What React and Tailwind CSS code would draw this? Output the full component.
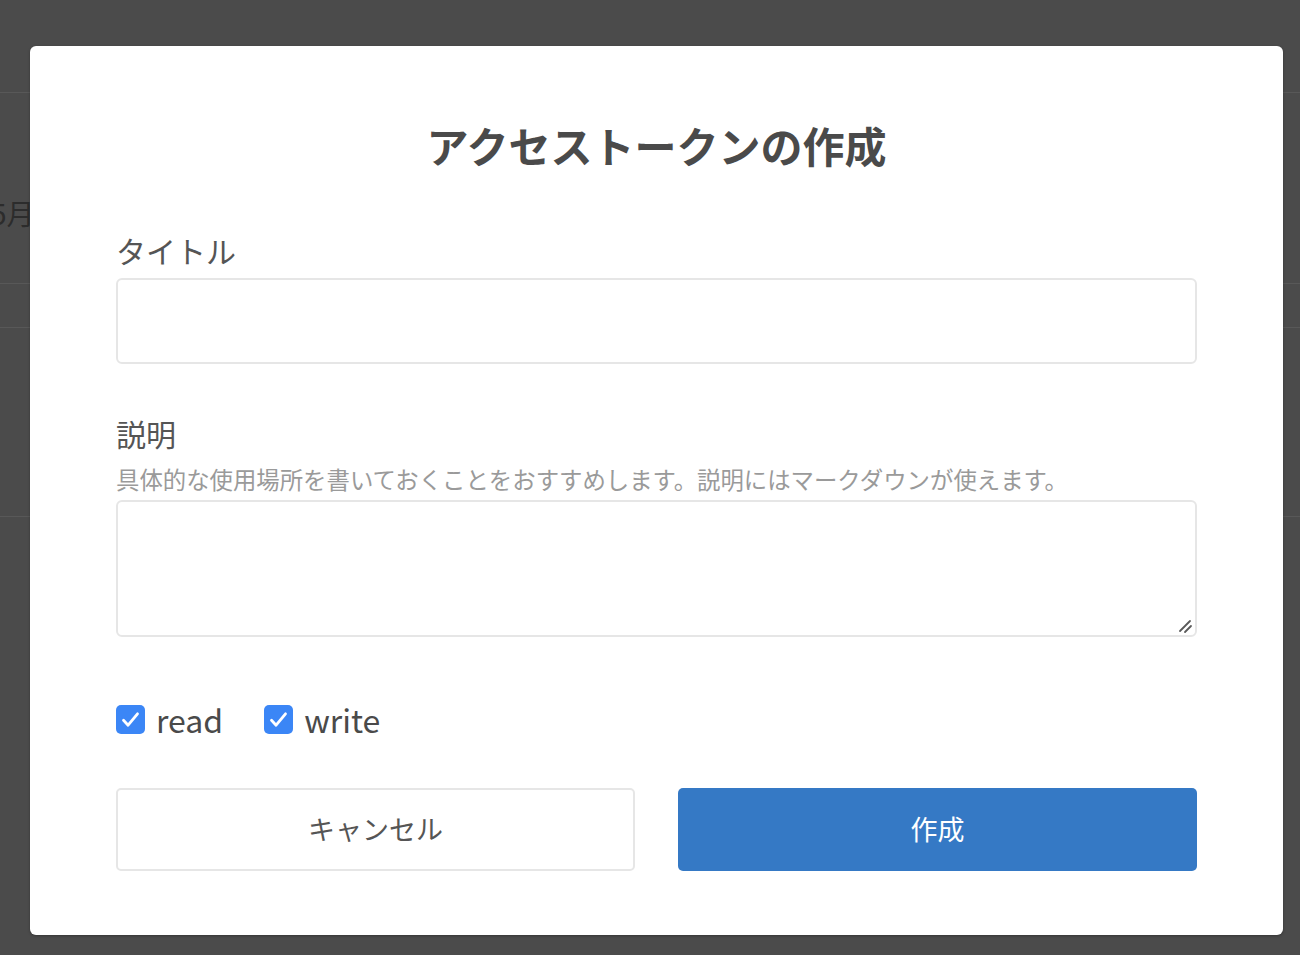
import { useState } from 'react';

const FONT = { fontFamily: '"Noto Sans CJK JP", "Noto Sans", sans-serif' };

function CheckBox({ label, checked, onChange }) {
  return (
    <label className="flex cursor-pointer items-center gap-[11px]">
      <span
        className={`flex h-[29px] w-[29px] items-center justify-center rounded-[5px] ${
          checked ? 'bg-[#3b86f6]' : 'border border-[#c8c8c8] bg-white'
        }`}
        onClick={onChange}
      >
        {checked && (
          <svg width="29" height="29" viewBox="0 0 29 29" fill="none">
            <path d="M7.5 15.2l4.6 5L21.5 8.8" stroke="white" strokeWidth="2.8" strokeLinecap="round" strokeLinejoin="round" />
          </svg>
        )}
      </span>
      <span className="text-[32px] leading-[36px] text-[#4a4a4a]">{label}</span>
    </label>
  );
}

export default function App() {
  const [scopes, setScopes] = useState({ read: true, write: true });
  const toggle = (k) => setScopes((s) => ({ ...s, [k]: !s[k] }));

  return (
    <div className="relative h-[955px] w-[1300px] overflow-hidden bg-[#4b4b4b]" style={FONT}>
      {/* page behind the overlay */}
      <div className="flex flex-col">
        <div className="h-[93px] border-b border-[#585858]" />
        <div className="flex h-[191px] items-start border-b border-[#585858] pt-[102px]">
          <span className="-ml-[9px] text-[28px] leading-[36px] text-[#2c2c2c]">5月</span>
        </div>
        <div className="h-[44px] border-b border-[#585858]" />
        <div className="h-[189px] border-b border-[#585858]" />
      </div>

      {/* modal */}
      <div className="absolute left-[30px] top-[46px] flex h-[889px] w-[1253px] flex-col rounded-[6px] bg-white px-[86px] pt-[75px] shadow-[0_1px_3px_rgba(0,0,0,0.3)]">
        <h2 className="text-center text-[42px] font-bold leading-[48px] text-[#4a4a4a]">
          アクセストークンの作成
        </h2>

        <label className="mt-[62px] text-[30px] leading-[38px] text-[#555]">タイトル</label>
        <input
          type="text"
          className="mt-[9px] h-[86px] w-full rounded-[6px] border-2 border-[#e6e6e6] px-4 text-[24px] outline-none"
        />

        <label className="mt-[50px] text-[30px] leading-[38px] text-[#555]">説明</label>
        <p className="mt-[12px] whitespace-nowrap text-[23.4px] leading-[30px] text-[#9a9a9a]">
          具体的な使用場所を書いておくことをおすすめします。説明にはマークダウンが使えます。
        </p>
        <div className="relative mt-[6px]">
          <textarea className="block h-[137px] w-full resize-none rounded-[6px] border-2 border-[#e6e6e6] px-4 py-3 text-[24px] outline-none" />
          <svg className="absolute bottom-[3px] right-[4px]" width="16" height="16" viewBox="0 0 16 16" fill="none">
            <path d="M3 13L13 3M8 14L14 8" stroke="#5a5a5a" strokeWidth="1.8" strokeLinecap="round" />
          </svg>
        </div>

        <div className="mt-[64px] flex h-[36px] items-center gap-[41px]">
          <CheckBox label="read" checked={scopes.read} onChange={() => toggle('read')} />
          <CheckBox label="write" checked={scopes.write} onChange={() => toggle('write')} />
        </div>

        <div className="mt-[51px] grid grid-cols-2 gap-[43px]">
          <button className="h-[83px] rounded-[5px] border-2 border-[#e6e6e6] bg-white text-[27px] text-[#555]">
            キャンセル
          </button>
          <button className="h-[83px] rounded-[5px] bg-[#3579c5] text-[27px] text-white">
            作成
          </button>
        </div>
      </div>
    </div>
  );
}
